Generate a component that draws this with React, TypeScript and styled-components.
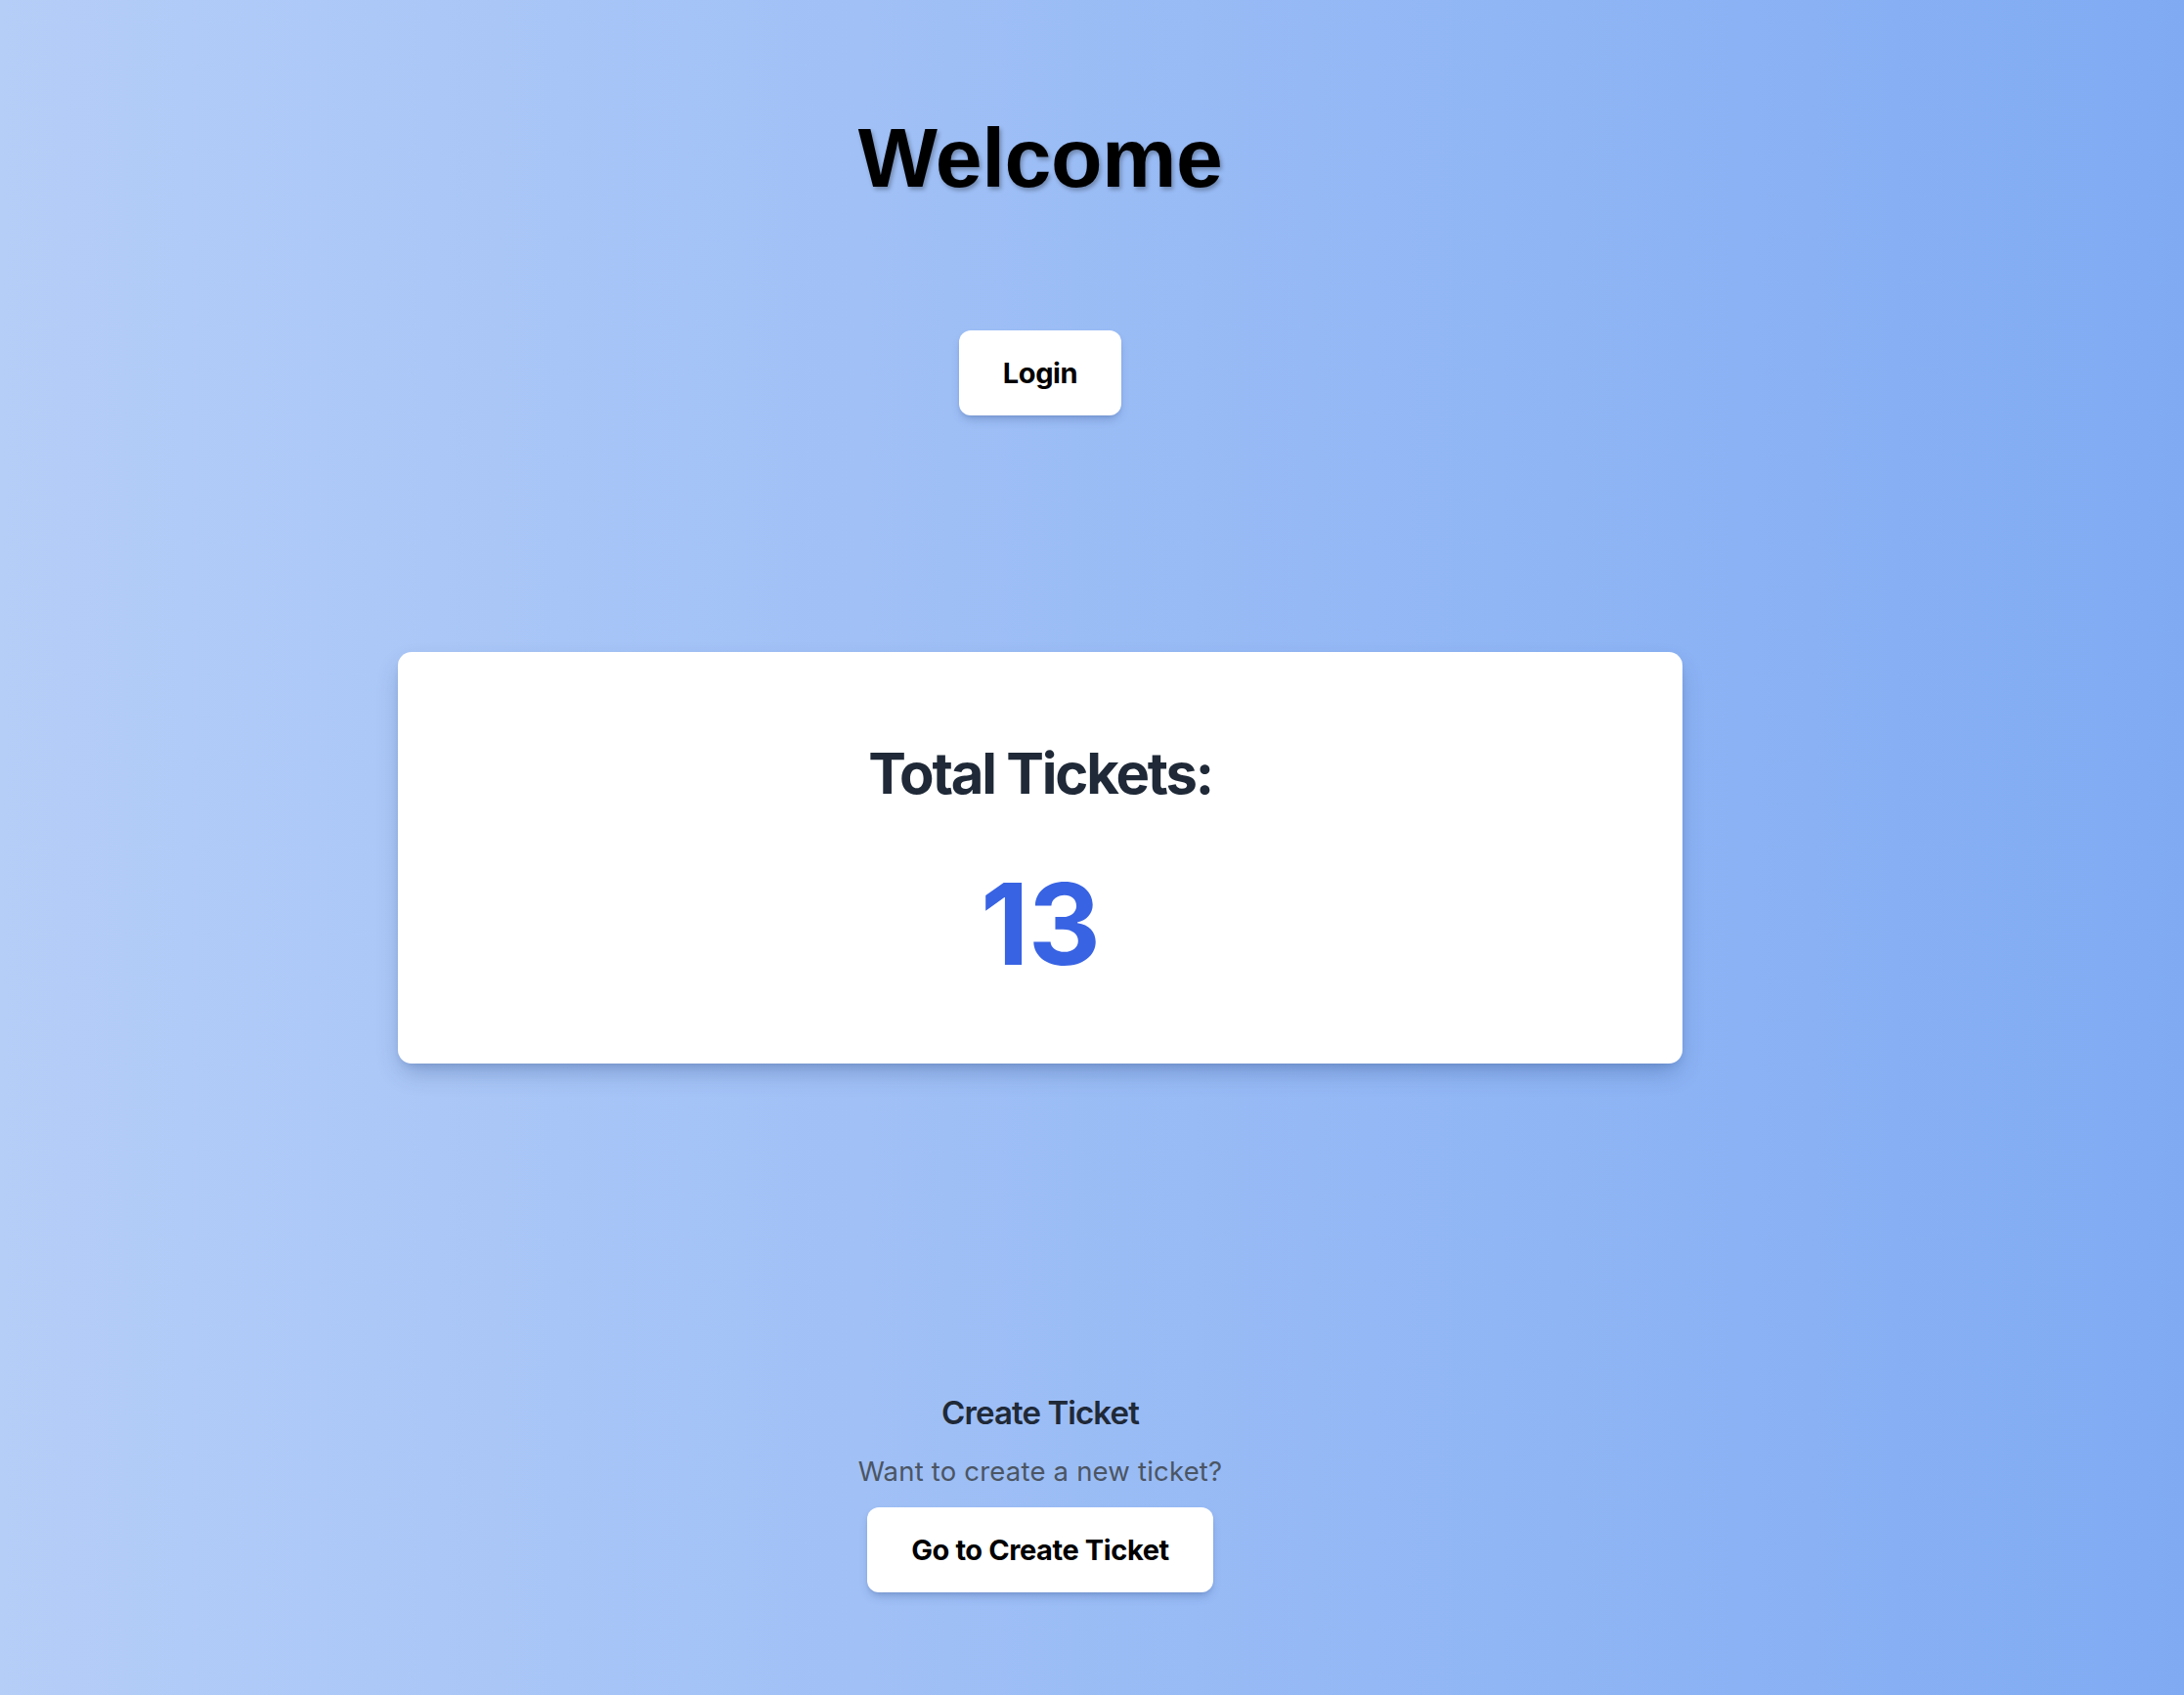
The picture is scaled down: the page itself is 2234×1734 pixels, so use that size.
import React from 'react';
import styled, { createGlobalStyle } from 'styled-components';

const GlobalStyle = createGlobalStyle`
    html, body {
        margin: 0;
        padding: 0;
    }

    body {
        font-family: Inter, "Noto Sans", sans-serif;
        background: linear-gradient(to right, #b5cef8, #80abf3);
        min-height: 100vh;
    }
`

const Page = styled.main`
    min-height: 1734px;
    box-sizing: border-box;
    padding: 118px 106px 0 0;
    display: flex;
    flex-direction: column;
    align-items: center;
`

const Title = styled.h1`
    margin: 0;
    font-family: "Liberation Sans", Arial, sans-serif;
    font-size: 86px;
    line-height: 1;
    font-weight: 700;
    letter-spacing: -0.5px;
    color: #000;
    text-shadow: 2px 3px 4px rgba(0, 0, 0, 0.28);
`

const Button = styled.button<{ $top: number }>`
    margin-top: ${props => props.$top}px;
    height: 87px;
    padding: 0 45px;
    display: flex;
    align-items: center;
    justify-content: center;
    border: none;
    border-radius: 12px;
    background: #fff;
    color: #000;
    font-family: Inter, sans-serif;
    font-size: 29px;
    font-weight: 700;
    letter-spacing: -0.4px;
    cursor: pointer;
    box-shadow: 0 6px 10px -2px rgba(30, 60, 120, 0.25), 0 2px 4px -2px rgba(30, 60, 120, 0.2);
`

const Card = styled.section`
    margin-top: 242px;
    width: 1314px;
    box-sizing: border-box;
    padding: 95px 0 85px;
    display: flex;
    flex-direction: column;
    align-items: center;
    gap: 68px;
    background: #fff;
    border-radius: 14px;
    box-shadow: 0 12px 24px -4px rgba(30, 60, 120, 0.3), 0 4px 8px -4px rgba(30, 60, 120, 0.2);
`

const CardTitle = styled.h2`
    margin: 0;
    font-size: 58px;
    line-height: 1;
    font-weight: 700;
    letter-spacing: -2.2px;
    color: #1f2937;
`

const Count = styled.div`
    font-size: 115px;
    line-height: 1;
    font-weight: 700;
    letter-spacing: -1px;
    color: #3863e3;
`

const CreateSection = styled.section`
    margin-top: 341px;
    display: flex;
    flex-direction: column;
    align-items: center;
`

const SectionTitle = styled.h3`
    margin: 0;
    font-size: 33px;
    line-height: 1;
    font-weight: 600;
    letter-spacing: -0.9px;
    color: #1f2937;
`

const SectionText = styled.p`
    margin: 30px 0 0;
    font-size: 27.5px;
    line-height: 1;
    letter-spacing: 0.2px;
    color: #4b5563;
`

export default function App() {
    const totalTickets = 13

    return (
        <>
            <GlobalStyle />
            <Page>
                <Title>Welcome</Title>
                <Button $top={134}>Login</Button>
                <Card>
                    <CardTitle>Total Tickets:</CardTitle>
                    <Count>{totalTickets}</Count>
                </Card>
                <CreateSection>
                    <SectionTitle>Create Ticket</SectionTitle>
                    <SectionText>Want to create a new ticket?</SectionText>
                    <Button $top={22}>Go to Create Ticket</Button>
                </CreateSection>
            </Page>
        </>
    )
}
